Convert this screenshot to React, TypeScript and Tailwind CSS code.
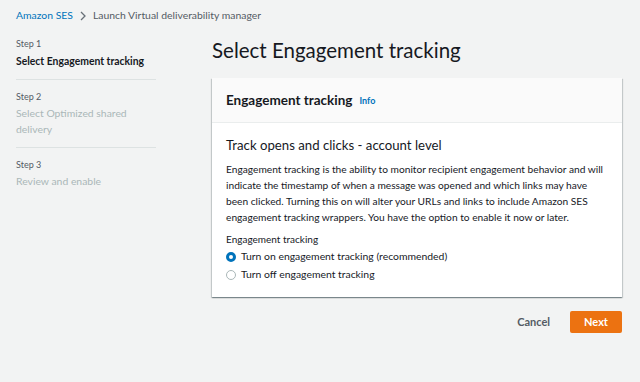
import React, { useState } from 'react';

const FONT = { fontFamily: 'Lato, "Noto Sans", sans-serif' };

const steps = [
  { label: 'Step 1', title: 'Select Engagement tracking', active: true },
  { label: 'Step 2', title: 'Select Optimized shared delivery', active: false },
  { label: 'Step 3', title: 'Review and enable', active: false },
];

const Radio: React.FC<{ checked: boolean; label: string; onClick: () => void }> = ({ checked, label, onClick }) => (
  <label className="flex items-center gap-[5px] h-[18px] cursor-pointer" onClick={onClick}>
    <span
      className={
        checked
          ? 'w-[10px] h-[10px] rounded-full border-[3px] border-[#0073bb] bg-white'
          : 'w-[10px] h-[10px] rounded-full border border-[#aab7b8] bg-white'
      }
    />
    <span className="text-[10.4px] text-[#16191f]">{label}</span>
  </label>
);

export default function App() {
  const [tracking, setTracking] = useState(true);

  return (
    <div className="w-[640px] h-[382px] bg-[#f2f3f3] text-[#16191f] overflow-hidden" style={FONT}>
      {/* breadcrumb */}
      <div className="flex items-center h-[16px] mt-[8px] px-[16px] text-[10.4px]">
        <span className="text-[#0073bb]">Amazon SES</span>
        <svg width="10" height="14" viewBox="0 0 10 14" className="mx-[5px]">
          <path d="M3 3l4 4-4 4" fill="none" stroke="#687078" strokeWidth="1.3" />
        </svg>
        <span className="text-[#545b64]">Launch Virtual deliverability manager</span>
      </div>

      <div className="flex">
        {/* wizard nav */}
        <nav className="w-[140px] ml-[16px] mt-[13px]">
          {steps.map((s, i) => (
            <div key={s.label} className={i < steps.length - 1 ? 'border-b border-[#dde2e2] pb-[10px] mb-[10px]' : ''}>
              <div className="text-[9px] text-[#545b64] leading-[14px]">{s.label}</div>
              <div
                className={
                  s.active
                    ? 'text-[10.4px] font-bold text-[#16191f] leading-[16px] mt-[2px]'
                    : 'text-[10.4px] text-[#aab7b8] leading-[16px] mt-[1px] pr-[10px]'
                }
              >
                {s.title}
              </div>
            </div>
          ))}
        </nav>

        {/* main */}
        <main className="ml-[56px] w-[410px]">
          <h1 className="text-[20.5px] leading-[26px] mt-[13px] text-[#16191f]">Select Engagement tracking</h1>

          <section className="mt-[15px] bg-white shadow-[0_1px_1px_rgba(0,28,36,0.3),1px_1px_1px_rgba(0,28,36,0.15),-1px_1px_1px_rgba(0,28,36,0.15)]">
            <div className="h-[45px] bg-[#fafafa] border-b border-[#eaeded] flex items-center px-[14px]">
              <h2 className="text-[13.5px] font-bold">Engagement tracking</h2>
              <span className="ml-[7px] text-[9px] font-bold text-[#0073bb] mt-[2px]">Info</span>
            </div>
            <div className="px-[14px] pt-[12px] pb-[13px]">
              <h3 className="text-[13.2px] leading-[20px]">Track opens and clicks - account level</h3>
              <p className="text-[10.2px] leading-[16px] mt-[6px]">
                Engagement tracking is the ability to monitor recipient engagement behavior and will indicate the
                timestamp of when a message was opened and which links may have been clicked. Turning this on will
                alter your URLs and links to include Amazon SES engagement tracking wrappers. You have the option to
                enable it now or later.
              </p>
              <div className="text-[10px] text-[#16191f] mt-[6px] leading-[16px]">Engagement tracking</div>
              <div className="mt-[1px]">
                <Radio checked={tracking} label="Turn on engagement tracking (recommended)" onClick={() => setTracking(true)} />
                <Radio checked={!tracking} label="Turn off engagement tracking" onClick={() => setTracking(false)} />
              </div>
            </div>
          </section>

          <div className="flex justify-end items-center gap-[20px] mt-[14px]">
            <button className="text-[11px] font-bold text-[#545b64]">Cancel</button>
            <button className="w-[52px] h-[22px] bg-[#ec7211] rounded-[2px] text-white text-[11px] font-bold">Next</button>
          </div>
        </main>
      </div>
    </div>
  );
}
